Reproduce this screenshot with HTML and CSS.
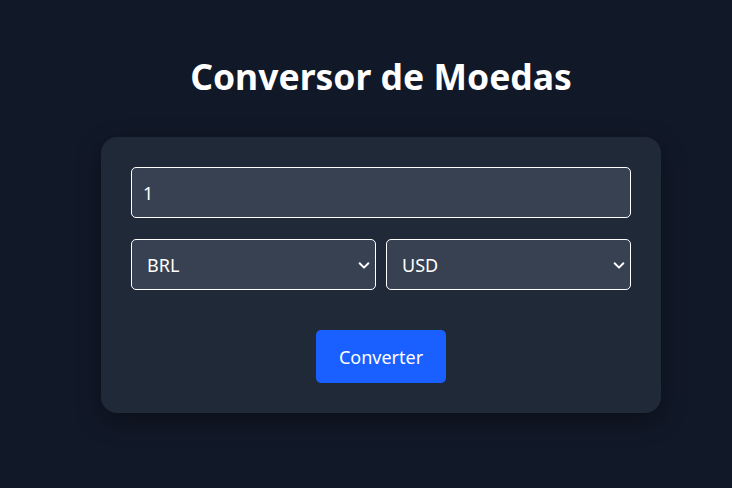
FILE: index.html
```html
<!DOCTYPE html>
<html lang="pt">
<head>
<meta charset="utf-8">
<title>Conversor de Moedas</title>
<link rel="stylesheet" href="styles.css">
</head>
<body>
<main class="page">
  <h1 class="title">Conversor de Moedas</h1>
  <section class="card">
    <input class="amount" type="text" value="1">
    <div class="row">
      <div class="select">
        <span>BRL</span>
        <svg viewBox="0 0 16 16" width="14" height="14"><path d="M3 6l5 5 5-5" fill="none" stroke="#fff" stroke-width="2.2" stroke-linecap="round" stroke-linejoin="round"/></svg>
      </div>
      <div class="select">
        <span>USD</span>
        <svg viewBox="0 0 16 16" width="14" height="14"><path d="M3 6l5 5 5-5" fill="none" stroke="#fff" stroke-width="2.2" stroke-linecap="round" stroke-linejoin="round"/></svg>
      </div>
    </div>
    <div class="actions">
      <button class="btn" type="button">Converter</button>
    </div>
  </section>
</main>
</body>
</html>
```

FILE: styles.css
```css
html, body {
  margin: 0;
  padding: 0;
  background: #111827;
  height: 100%;
}
body {
  font-family: "Noto Sans", "Open Sans", sans-serif;
  color: #fff;
}
.page {
  display: flex;
  flex-direction: column;
  align-items: center;
  padding: 52px 0 0 30px;
}
.title {
  margin: 0 0 37px;
  font-size: 35.5px;
  font-weight: 700;
  line-height: 48px;
}
.card {
  width: 500px;
  padding: 30px;
  background: #1f2937;
  border-radius: 16px;
  box-shadow: 0 8px 24px rgba(0,0,0,0.35);
  display: flex;
  flex-direction: column;
}
.amount {
  box-sizing: border-box;
  height: 51px;
  width: 100%;
  background: #374151;
  border: 1px solid #fff;
  border-radius: 5px;
  color: #fff;
  font: inherit;
  font-size: 18px;
  padding: 0 11px;
  margin: 0 0 21px;
}
.row {
  display: flex;
  gap: 10px;
}
.select {
  box-sizing: border-box;
  flex: 1;
  height: 51px;
  background: #374151;
  border: 1px solid #fff;
  border-radius: 5px;
  display: flex;
  align-items: center;
  justify-content: space-between;
  padding: 0 4px 0 15px;
  font-size: 18px;
}
.actions {
  display: flex;
  justify-content: center;
  margin-top: 40px;
}
.btn {
  width: 130px;
  height: 53px;
  border: 0;
  border-radius: 5px;
  background: #1a5fff;
  color: #fff;
  font: inherit;
  font-size: 18px;
}
```
